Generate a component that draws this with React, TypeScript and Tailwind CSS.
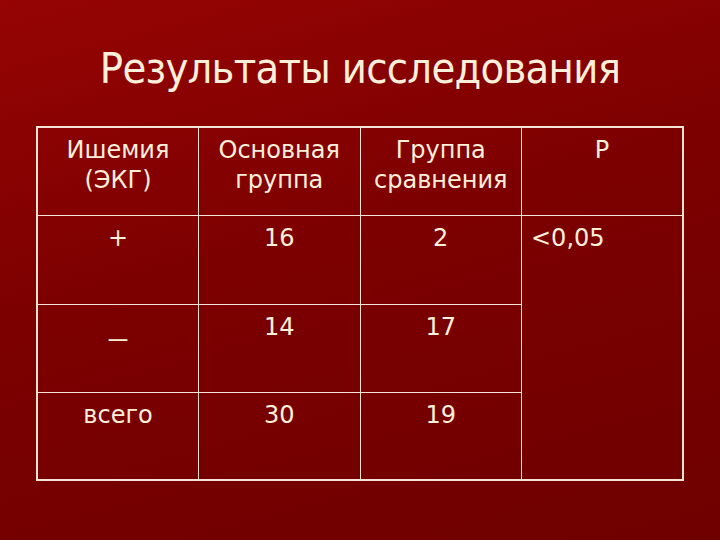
export default function App() {
  const cell = "border border-[#f3e3d6] align-top text-center pt-[7px] px-1";
  return (
    <div className="w-[720px] h-[540px] overflow-hidden bg-[linear-gradient(165deg,#960404_0%,#7c0000_45%,#6f0000_100%)] font-['DejaVu_Sans','Liberation_Sans',sans-serif] text-[#fdf0da]">
      <h1 className="pt-[42px] text-center text-[43px] leading-[52px] tracking-[-0.7px] font-['DejaVu_Sans_Condensed','DejaVu_Sans',sans-serif] font-stretch-condensed">
        Результаты исследования
      </h1>
      <table className="mt-[32px] ml-[36px] w-[648px] table-fixed border-collapse border-2 border-[#f3e3d6] text-[24px] leading-[30px]">
        <tbody>
          <tr className="h-[88px]">
            <td className={cell}>
              Ишемия
              <br />
              (ЭКГ)
            </td>
            <td className={cell}>
              Основная
              <br />
              группа
            </td>
            <td className={cell}>
              Группа
              <br />
              сравнения
            </td>
            <td className={cell}>P</td>
          </tr>
          <tr className="h-[89px]">
            <td className={cell}>+</td>
            <td className={cell}>16</td>
            <td className={cell}>2</td>
            <td rowSpan={3} className="border border-[#f3e3d6] align-top text-left pt-[7px] pl-[9px]">
              &lt;0,05
            </td>
          </tr>
          <tr className="h-[88px]">
            <td className={cell}>
              <span className="inline-block scale-x-150">_</span>
            </td>
            <td className={cell}>14</td>
            <td className={cell}>17</td>
          </tr>
          <tr className="h-[88px]">
            <td className={cell}>всего</td>
            <td className={cell}>30</td>
            <td className={cell}>19</td>
          </tr>
        </tbody>
      </table>
    </div>
  );
}
